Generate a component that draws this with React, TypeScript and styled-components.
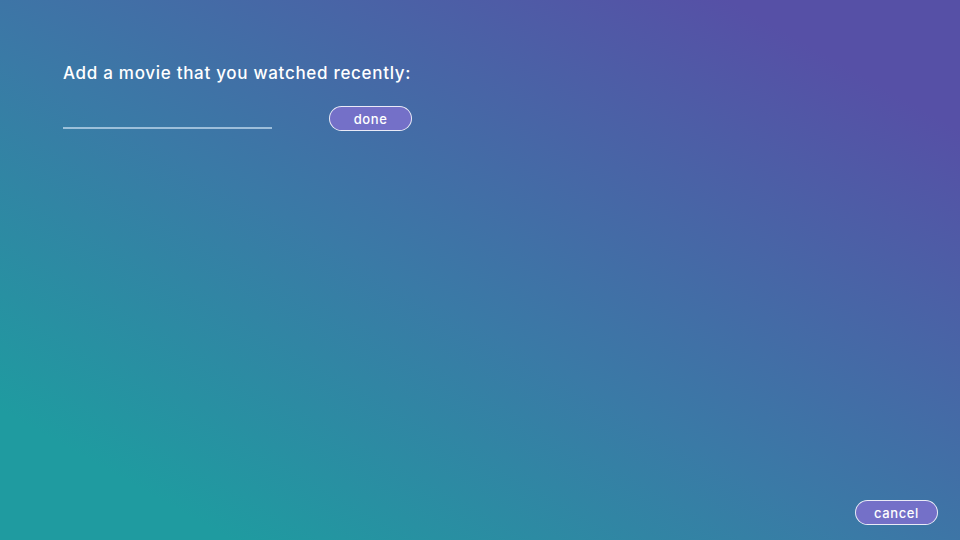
import React from "react";
import styled, { createGlobalStyle } from "styled-components";

const Global = createGlobalStyle`
  html, body { margin: 0; padding: 0; }
  body { font-family: Inter, "Noto Sans", sans-serif; }
`;

const Screen = styled.div`
  width: 960px;
  height: 540px;
  box-sizing: border-box;
  background: linear-gradient(to top right, #1f9ba0 12%, #3a7aa6 45%, #5650a6 88%);
  display: flex;
  flex-direction: column;
  justify-content: space-between;
  padding: 62px 22px 15px 63px;
  color: #fff;
`;

const Form = styled.div`
  display: flex;
  flex-direction: column;
  gap: 21px;
`;

const Prompt = styled.h1`
  margin: 0;
  font-size: 17px;
  font-weight: 500;
  letter-spacing: 0.7px;
  line-height: 22px;
`;

const Row = styled.div`
  display: flex;
  align-items: flex-end;
  gap: 57px;
`;

const Field = styled.input`
  width: 209px;
  height: 24px;
  box-sizing: border-box;
  background: transparent;
  border: none;
  border-bottom: 2px solid rgba(190, 215, 235, 0.75);
  color: #fff;
  font-family: inherit;
  font-size: 14px;
  outline: none;
  padding: 0;
  margin-bottom: 2px;
`;

const Pill = styled.button`
  width: 83px;
  height: 25px;
  box-sizing: border-box;
  border-radius: 13px;
  border: 1px solid rgba(255, 255, 255, 0.85);
  background: #7470c8;
  color: #fff;
  font-family: inherit;
  font-size: 13px;
  font-weight: 500;
  letter-spacing: 0.6px;
  padding: 0;
  cursor: pointer;
`;

const Footer = styled.div`
  display: flex;
  justify-content: flex-end;
`;

export default function App() {
  return (
    <>
      <Global />
      <Screen>
        <Form>
          <Prompt>Add a movie that you watched recently:</Prompt>
          <Row>
            <Field type="text" />
            <Pill>done</Pill>
          </Row>
        </Form>
        <Footer>
          <Pill>cancel</Pill>
        </Footer>
      </Screen>
    </>
  );
}
